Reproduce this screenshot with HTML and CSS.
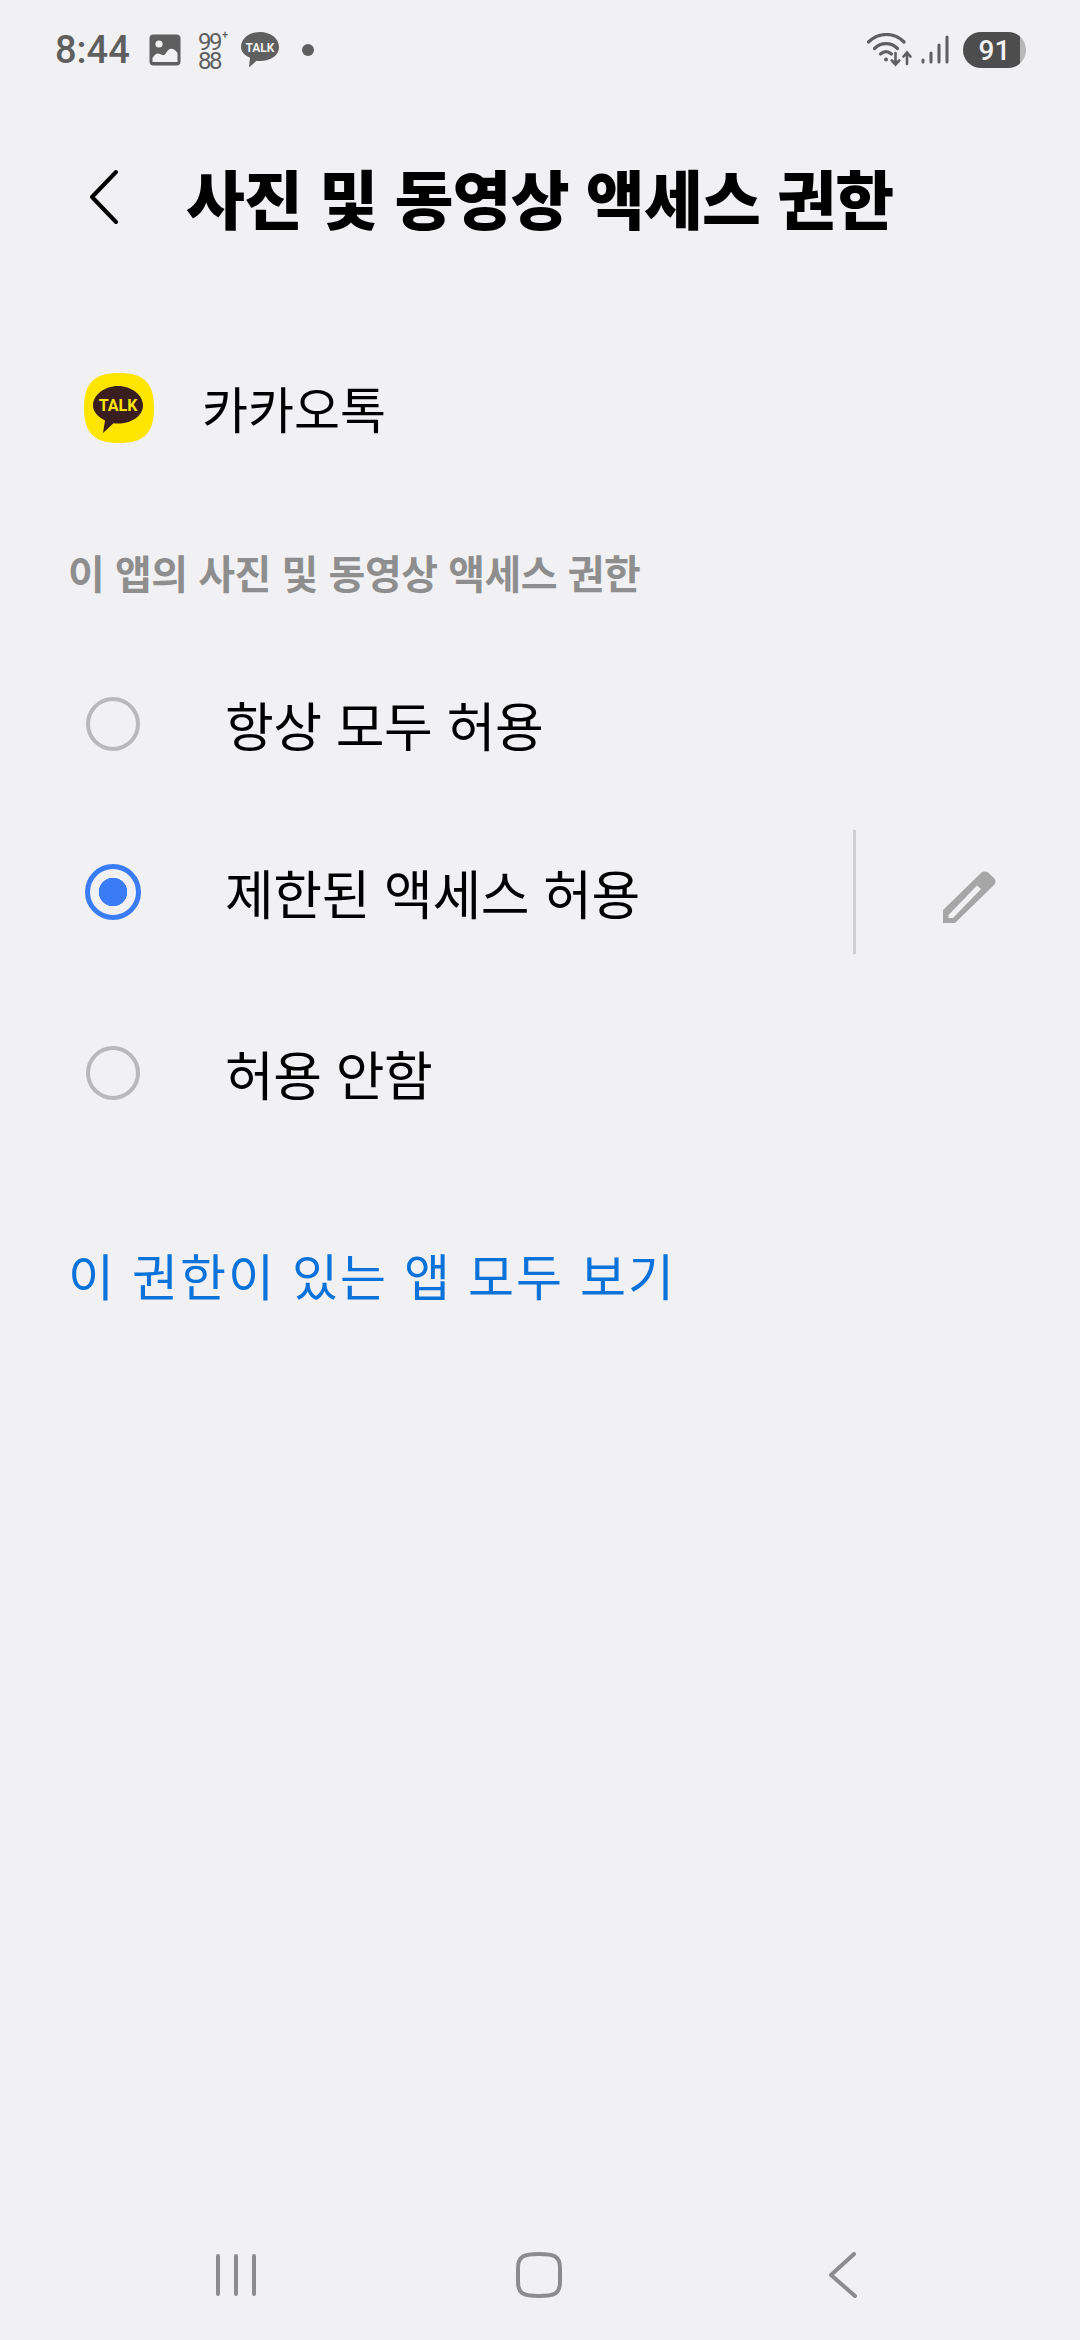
FILE: index.html
```html
<!DOCTYPE html>
<html lang="ko">
<head>
<meta charset="utf-8">
<title>사진 및 동영상 액세스 권한</title>
<link rel="stylesheet" href="styles.css">
</head>
<body>
<div class="page">
  <div class="status">
    <span class="time">8:44</span>
    <svg class="st-img" viewBox="0 0 32 32"><rect x="0.5" y="0.5" width="31" height="31" rx="4" fill="#5f5f5f"/><circle cx="10" cy="10" r="3.600" fill="#f1f1f4"/><path d="M3.500 28 V24 C6 20 8 18.500 11 20 C14 21.500 15 22 17 19 C20 14 24 13 28.500 19 V28 Z" fill="#f1f1f4"/></svg>
    <svg class="st-num" viewBox="0 0 32 40"><text class="st-num-t"><tspan x="0" y="20">99</tspan><tspan class="st-num-p" x="24" y="8">+</tspan><tspan x="0" y="39">88</tspan></text></svg>
    <svg class="st-talk" viewBox="0 0 38 36"><path d="M19 0 C29.500 0 38 6.500 38 15 C38 23.500 29.500 29 19 29 C17.800 29 16.500 29 15.500 28.700 L8 35.500 L9 25.800 C3.500 23.300 0 19.500 0 15 C0 6.500 8.500 0 19 0 Z" fill="#5f5f5f"/><text x="19" y="19.500" class="st-talk-t">TALK</text></svg>
    <span class="st-dot"></span>
    <span class="st-gap"></span>
    <svg class="st-wifi" viewBox="0 0 46 34" fill="none" stroke="#5f5f5f" stroke-width="3.200" stroke-linecap="round"><path d="M1.500 9 C12 -1 27 -1 37 9"/><path d="M7.500 15.500 C14 9 24 9 30.500 15.500"/><path d="M13.500 21 C17 18 21 18 24.500 21"/><circle cx="19" cy="26.500" r="1.200" fill="#5f5f5f" stroke-width="1.500"/><path d="M28.500 20 V31 M24.800 27.500 L28.500 31.500 L32.200 27.500" stroke-width="2.600"/><path d="M40 31 V20 M36.500 23.500 L40 19.500 L43.500 23.500" stroke-width="2.600"/></svg>
    <svg class="st-signal" viewBox="0 0 28 30" fill="none" stroke="#5f5f5f" stroke-width="3" stroke-linecap="round"><path d="M2 27 V25 M10 27 V18 M18 27 V10 M26 27 V2"/></svg>
    <span class="st-batt"><span class="st-batt-n">91</span></span>
  </div>

  <header class="title-bar">
    <svg class="back" viewBox="0 0 32 56" fill="none" stroke="#000" stroke-width="4" stroke-linecap="round" stroke-linejoin="round"><path d="M28 3 L4 28 L28 53"/></svg>
    <h1 class="title">사진 및 동영상 액세스 권한</h1>
  </header>

  <div class="app-row">
    <svg class="app-icon" viewBox="0 0 70 70">
      <path d="M35 0 C60 0 70 10 70 35 C70 60 60 70 35 70 C10 70 0 60 0 35 C0 10 10 0 35 0 Z" fill="#fee500"/>
      <path d="M34 13 C47.500 13 59 22 59 32.500 C59 43 47.500 50.500 34 50.500 C32.500 50.500 31 50.400 29.500 50.200 L19 60 L21 47.500 C14 44 9 38.500 9 32.500 C9 22 20.500 13 34 13 Z" fill="#3a1d1d"/>
      <text x="34" y="38" class="app-icon-t">TALK</text>
    </svg>
    <span class="app-name">카카오톡</span>
  </div>

  <h2 class="section">이 앱의 사진 및 동영상 액세스 권한</h2>

  <div class="options">
    <div class="option">
      <span class="radio"></span>
      <span class="opt-label">항상 모두 허용</span>
    </div>
    <div class="option option-mid">
      <span class="radio radio-on"></span>
      <span class="opt-label">제한된 액세스 허용</span>
      <span class="divider"></span>
      <svg class="pencil" viewBox="0 0 54 54"><path fill-rule="evenodd" fill="#a6a6a6" d="M0 52 V39 L38 2 C40 0 43 0 45 1.500 L51 7 C53 9 53 12 51 14 L12 52 Z M5.500 47 H10 L38 18 L34 14.500 L5.500 44 Z"/></svg>
    </div>
    <div class="option">
      <span class="radio"></span>
      <span class="opt-label">허용 안함</span>
    </div>
  </div>

  <a class="link">이 권한이 있는 앱 모두 보기</a>

  <nav class="navbar">
    <svg class="nav-recents" viewBox="0 0 44 44" fill="none" stroke="#8c8c8c" stroke-width="4" stroke-linecap="round"><path d="M4 3 V41 M22 3 V41 M40 3 V41"/></svg>
    <svg class="nav-home" viewBox="0 0 46 46" fill="none" stroke="#8c8c8c" stroke-width="4"><path d="M23 2 C38 2 44 4 44 16 V30 C44 42 38 44 23 44 C8 44 2 42 2 30 V16 C2 4 8 2 23 2 Z"/></svg>
    <svg class="nav-back" viewBox="0 0 30 46" fill="none" stroke="#8c8c8c" stroke-width="4" stroke-linecap="round" stroke-linejoin="round"><path d="M26 2 L3 23 L27 44"/></svg>
  </nav>
</div>
</body>
</html>
```
FILE: styles.css
```css
* { box-sizing: border-box; }

html, body { margin: 0; padding: 0; }

body {
  background: #f1f1f4;
  font-family: "Noto Sans CJK KR", "Noto Sans", sans-serif;
  color: #000;
}

.page {
  width: 1080px;
  height: 2340px;
  display: flex;
  flex-direction: column;
  overflow: hidden;
}

/* status bar */
.status {
  height: 100px;
  padding: 0 54px 0 55px;
  display: flex;
  align-items: center;
}

.time {
  font-family: Roboto, sans-serif;
  font-size: 38px;
  font-weight: 500;
  color: #5f5f5f;
  width: 94px;
}

.st-img { width: 32px; height: 32px; }
.st-num { width: 32px; height: 40px; margin-left: 17px; overflow: visible; }
.st-num-t { font: 400 24px Roboto, sans-serif; fill: #5f5f5f; letter-spacing: -2.500px; }
.st-num-p { font-size: 11px; font-weight: 500; letter-spacing: 0; }
.st-talk { width: 38px; height: 36px; margin-left: 11px; }
.st-talk-t { font: 700 12px Roboto, sans-serif; fill: #f1f1f4; text-anchor: middle; }
.st-dot { width: 12px; height: 12px; border-radius: 50%; background: #5f5f5f; margin-left: 23px; }
.st-gap { flex: 1; }
.st-wifi { width: 46px; height: 34px; margin-left: 1px; }
.st-signal { width: 28px; height: 30px; margin-left: 8px; }

.st-batt {
  width: 63px;
  height: 36px;
  margin-left: 14px;
  border-radius: 18px;
  background: linear-gradient(90deg, #4d4d4d 91%, #b8b8b8 91%);
  display: flex;
  align-items: center;
  justify-content: center;
}

.st-batt-n {
  font-family: Roboto, sans-serif;
  font-size: 28px;
  font-weight: 500;
  color: #f1f1f4;
}

/* title bar */
.title-bar {
  height: 194px;
  display: flex;
  align-items: center;
  padding-left: 88px;
}

.back { width: 32px; height: 56px; }

.title {
  margin: 0 0 3px 66px;
  font-size: 64px;
  font-weight: 900;
  letter-spacing: -0.800px;
  white-space: nowrap;
}

/* app row */
.app-row {
  margin-top: 79px;
  height: 70px;
  display: flex;
  align-items: center;
  padding-left: 84px;
}

.app-icon { width: 70px; height: 70px; }
.app-icon-t { font: 700 16px Roboto, sans-serif; fill: #fee500; text-anchor: middle; }

.app-name {
  margin: 0 0 2px 48px;
  font-size: 50px;
  font-weight: 400;
}

/* section heading */
.section {
  margin: 94px 0 0 68px;
  height: 70px;
  line-height: 70px;
  font-size: 40px;
  font-weight: 700;
  letter-spacing: -0.500px;
  color: #8e8e8e;
  white-space: nowrap;
}

/* radio options */
.options {
  margin-top: 33px;
  display: flex;
  flex-direction: column;
}

.option {
  height: 168px;
  display: flex;
  align-items: center;
  padding-left: 86px;
}

.option-mid { margin-bottom: 13px; }

.radio {
  width: 54px;
  height: 54px;
  border-radius: 50%;
  border: 4px solid #b9b9bb;
  flex: none;
}

.radio-on {
  width: 56px;
  height: 56px;
  margin: 0 -1px;
  border: 5px solid #3a7cf6;
  background: radial-gradient(circle, #3a7cf6 0 14px, transparent 14.500px);
}

.opt-label {
  margin-left: 85px;
  font-size: 53px;
  letter-spacing: -0.500px;
  white-space: nowrap;
}

.divider {
  width: 3px;
  height: 124px;
  background: #cfcfd1;
  margin-left: auto;
}

.pencil {
  width: 54px;
  height: 54px;
  margin: 12px 83px 0 87px;
}

/* link */
.link {
  margin: 81px 0 0 68px;
  font-size: 50px;
  color: #0b72d9;
  letter-spacing: 2px;
  white-space: nowrap;
}

/* navigation bar */
.navbar {
  margin-top: auto;
  height: 130px;
  display: flex;
  align-items: center;
}

.nav-recents { width: 44px; height: 44px; margin-left: 214px; }
.nav-home { width: 46px; height: 46px; margin-left: 258px; }
.nav-back { width: 30px; height: 46px; margin-left: 266px; }
```
